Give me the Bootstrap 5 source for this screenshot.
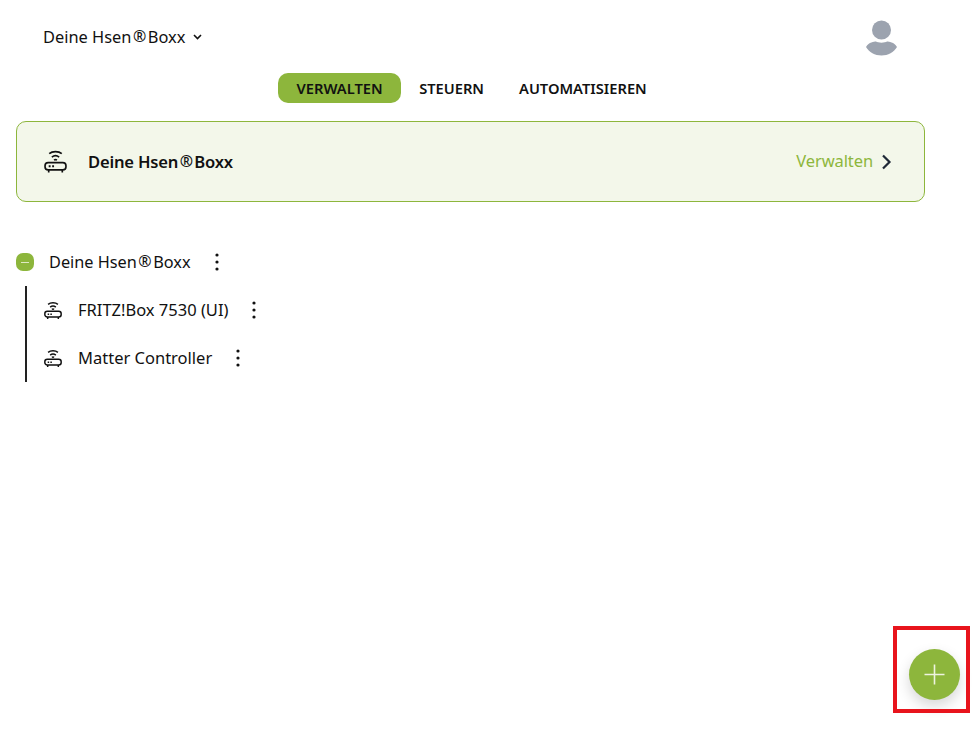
<!DOCTYPE html>
<html lang="de">
<head>
<meta charset="utf-8">
<title>Hsen Boxx</title>
<link href="https://cdn.jsdelivr.net/npm/bootstrap@5.3.0/dist/css/bootstrap.min.css" rel="stylesheet">
<style>
html,body{height:100%;background:#fff;}
body{font-family:"Noto Sans","Open Sans",sans-serif;color:#111;font-size:16px;position:relative;overflow:hidden;}
.page-wrap{width:941px;padding-left:16px;}
.top-bar{height:73px;padding-left:27px;padding-right:43px;padding-top:21px;}
.top-title{font-size:16.4px;line-height:32px;height:32px;}
.reg{font-size:16px;line-height:1;margin:0 1.5px;position:relative;top:-1px;}
.avatar{margin-top:-1px;}
.tab-row{height:30px;gap:0;padding-left:262px;}
.tab-item{font-size:14.7px;font-weight:600;line-height:31px;height:30px;padding:0 18px;color:#111;border-radius:10px;text-decoration:none;}
.tab-item.is-on{background:#8db63c;padding:0 18.500px;}
.tab-item.is-last{margin-left:-1px;}
.box-card{margin-top:18px;height:81px;width:909px;background:#f3f7ea;border:1px solid #8db63c;border-radius:10px;padding:0 32px 0 27px;}
.box-name{font-size:16.6px;font-weight:600;letter-spacing:-.2px;margin-left:21px;padding-top:2px;}
.box-link{font-size:16.5px;color:#8db63c;letter-spacing:-.1px;}
.tree-root{margin-top:36px;height:48px;}
.minus-dot{width:18px;height:18px;border-radius:7px;background:#8db63c;margin-right:15px;display:flex;align-items:center;justify-content:center;}
.minus-dot span{display:block;width:8px;height:1px;background:#dfe9c4;}
.tree-label{font-size:16.3px;}
.kebab{margin-left:24px;}
.tree-kids{margin-left:9px;border-left:2px solid #222;height:96px;padding-left:17px;}
.kid-row{height:48px;}
.kid-label{margin-left:16px;font-size:16.5px;}
.fab-btn{position:absolute;left:909px;top:649px;width:51px;height:51px;border-radius:50%;background:#8db63c;box-shadow:0 6px 14px rgba(0,0,0,.16);display:flex;align-items:center;justify-content:center;border:0;padding:0;}
.mark-box{position:absolute;left:893px;top:626px;width:77px;height:87px;border:4px solid #e8141c;}
</style>
</head>
<body>
<div class="page-wrap">
  <div class="top-bar d-flex justify-content-between align-items-start">
    <div class="top-title d-flex align-items-center">
      <span>Deine Hsen<span class="reg">®</span>Boxx</span>
      <svg class="ms-2" width="9" height="6" viewBox="0 0 9 6"><path d="M1 1l3.500 3.500L8 1" fill="none" stroke="#111" stroke-width="1.600"/></svg>
    </div>
    <svg class="avatar" width="33" height="36" viewBox="0 0 33 36"><circle cx="16.500" cy="10" r="9.500" fill="#9ca3af"/><path d="M1 27c3-5 8-5.500 10-5.500 2 1.500 9 1.500 11 0 2 0 7 .5 10 5.500-3 5-9 8.500-15.500 8.500S4 32 1 27z" fill="#9ca3af"/></svg>
  </div>
  <div class="tab-row d-flex">
    <a class="tab-item is-on" href="#">VERWALTEN</a>
    <a class="tab-item" href="#">STEUERN</a>
    <a class="tab-item is-last" href="#">AUTOMATISIEREN</a>
  </div>
  <div class="box-card d-flex align-items-center justify-content-between">
    <div class="d-flex align-items-center">
      <svg width="23" height="23" viewBox="0 0 22 22" fill="none" stroke="#111" stroke-width="1.600"><path d="M5 3.500C8 1 14 1 17 3.500M7.500 6.800c2-1.600 5-1.600 7 0M9.600 9.700c.9-.6 1.900-.6 2.800 0"/><rect x="1" y="12" width="20" height="7" rx="3"/><path d="M4.500 19v2.500M17.500 19v2.500"/><path d="M4.500 15.500h1.800M7.800 15.500h1.800" stroke-width="1.800"/></svg>
      <span class="box-name">Deine Hsen<span class="reg">®</span>Boxx</span>
    </div>
    <div class="d-flex align-items-center">
      <span class="box-link">Verwalten</span>
      <svg class="ms-2" width="11" height="16" viewBox="0 0 11 16"><path d="M2 1.500L8.500 8 2 14.500" fill="none" stroke="#1f2937" stroke-width="2.200"/></svg>
    </div>
  </div>
  <div class="tree-root d-flex align-items-center">
    <span class="minus-dot"><span></span></span>
    <span class="tree-label">Deine Hsen<span class="reg">®</span>Boxx</span>
    <svg class="kebab" width="4" height="18" viewBox="0 0 4 18" fill="#111"><circle cx="2" cy="2" r="1.600"/><circle cx="2" cy="9" r="1.600"/><circle cx="2" cy="16" r="1.600"/></svg>
  </div>
  <div class="tree-kids">
    <div class="kid-row d-flex align-items-center">
      <svg width="18" height="19" viewBox="0 0 22 22" fill="none" stroke="#111" stroke-width="1.800"><path d="M5 3.500C8 1 14 1 17 3.500M7.500 6.800c2-1.600 5-1.600 7 0M9.600 9.700c.9-.6 1.900-.6 2.800 0"/><rect x="1" y="12" width="20" height="7" rx="3"/><path d="M4.500 19v2.500M17.500 19v2.500"/><path d="M4.500 15.500h1.800M7.800 15.500h1.800"/></svg>
      <span class="tree-label kid-label">FRITZ!Box 7530 (UI)</span>
      <svg class="kebab" width="4" height="18" viewBox="0 0 4 18" fill="#111"><circle cx="2" cy="2" r="1.600"/><circle cx="2" cy="9" r="1.600"/><circle cx="2" cy="16" r="1.600"/></svg>
    </div>
    <div class="kid-row d-flex align-items-center">
      <svg width="18" height="19" viewBox="0 0 22 22" fill="none" stroke="#111" stroke-width="1.800"><path d="M5 3.500C8 1 14 1 17 3.500M7.500 6.800c2-1.600 5-1.600 7 0M9.600 9.700c.9-.6 1.900-.6 2.800 0"/><rect x="1" y="12" width="20" height="7" rx="3"/><path d="M4.500 19v2.500M17.500 19v2.500"/><path d="M4.500 15.500h1.800M7.800 15.500h1.800"/></svg>
      <span class="tree-label kid-label">Matter Controller</span>
      <svg class="kebab" width="4" height="18" viewBox="0 0 4 18" fill="#111"><circle cx="2" cy="2" r="1.600"/><circle cx="2" cy="9" r="1.600"/><circle cx="2" cy="16" r="1.600"/></svg>
    </div>
  </div>
</div>
<button class="fab-btn" type="button" aria-label="Hinzufügen"><svg width="21" height="21" viewBox="0 0 21 21"><path d="M10.500 .5v20M.5 10.500h20" stroke="#eef3df" stroke-width="1.600" fill="none"/></svg></button>
<div class="mark-box"></div>
<script src="https://cdn.jsdelivr.net/npm/bootstrap@5.3.0/dist/js/bootstrap.bundle.min.js"></script>
</body>
</html>
